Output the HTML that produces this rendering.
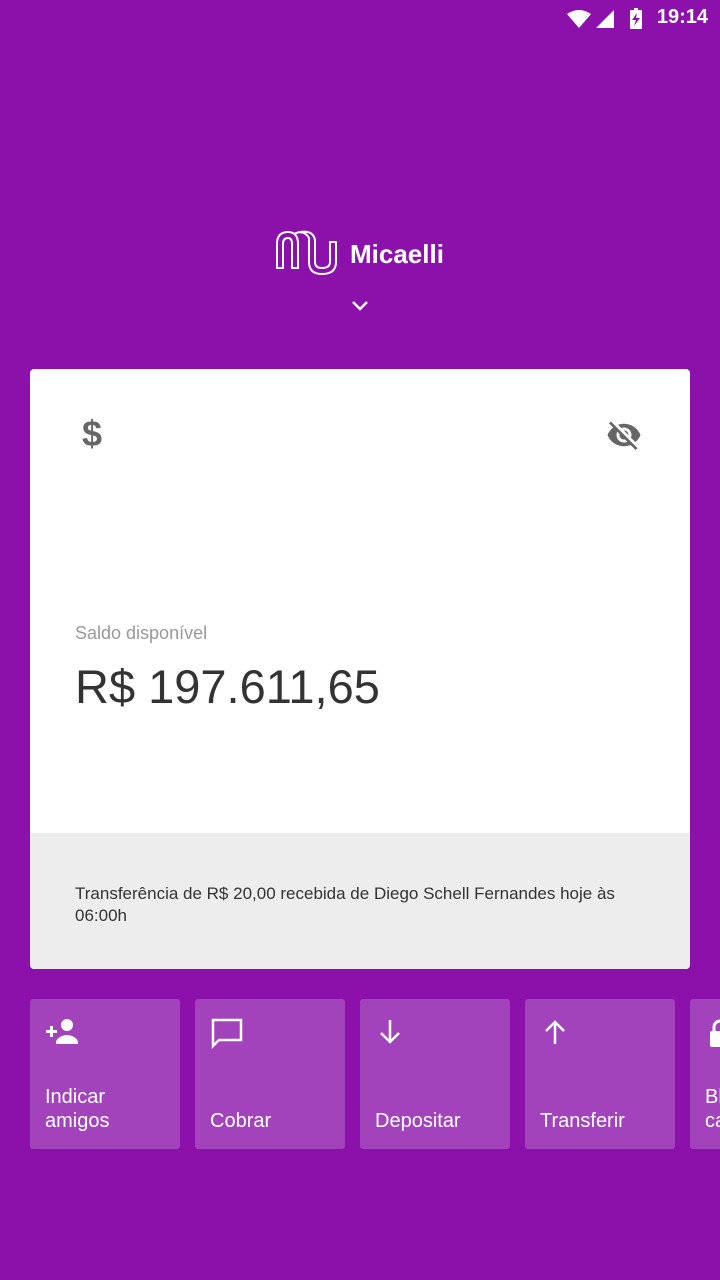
<!DOCTYPE html>
<html><head><meta charset="utf-8"><style>
*{margin:0;padding:0;box-sizing:border-box}
body{width:720px;height:1280px;background:#8c11ab;font-family:"Liberation Sans",sans-serif;position:relative;overflow:hidden}
.abs{position:absolute}
.card{left:30px;top:369px;width:660px;height:600px;background:#fff;border-radius:4px;overflow:hidden}
.foot{position:absolute;left:0;top:464px;width:660px;height:136px;background:#ededed;padding:50px 45px 0;font-size:17px;color:#333;line-height:22px}
.tile{position:absolute;top:999px;width:150px;height:150px;background:#a343bc;border-radius:3px;color:#fff;font-size:20px}
.tile .t{position:absolute;left:15px;bottom:16px;line-height:24px}
.tile svg{position:absolute;left:15px;top:18px}
</style></head><body>
<div class="abs" style="right:12px;top:6px;color:#fff;font-size:20px;font-weight:bold">19:14</div>
<svg class="abs" style="left:566px;top:8px" width="82" height="22" viewBox="0 0 82 22"><path d="M1 6 Q13 -2 25 6 L13 20Z" fill="#fff"/><path d="M30 20 L48 2 V20Z" fill="#fff"/><rect x="64" y="2" width="12" height="19" rx="1" fill="#fff"/><rect x="68" y="0" width="4" height="3" fill="#fff"/><path d="M71 5 L66 12 H70 L68 18 L74 10 H70Z" fill="#8c11ab"/></svg>
<svg class="abs" style="left:276px;top:230px" width="62" height="46" viewBox="0 0 62 46" fill="none" stroke="#fff" stroke-width="2"><path d="M1 38 V14 Q1 2 12 2 Q22 2 22 14 V38 H16 V14 Q16 8 12 8 Q7 8 7 14 V38 Z"/><path d="M18 4 Q28 -1 33 8 L33 32 Q33 44 46 44 Q60 44 60 32 V12 H54 V32 Q54 38 46 38 Q39 38 39 32 V10 Q37 0 24 2"/></svg>
<div class="abs" style="left:350px;top:239px;color:#fff;font-size:26px;font-weight:bold">Micaelli</div>
<svg class="abs" style="left:351px;top:300px" width="18" height="12" viewBox="0 0 18 12"><path d="M2 2 L9 9 L16 2" stroke="#fff" stroke-width="2.5" fill="none"/></svg>
<div class="abs card">
<div class="abs" style="left:52px;top:44px;font-size:36px;color:#666;font-weight:bold">$</div>
<svg class="abs" style="left:574px;top:48px" width="40" height="36" viewBox="0 0 24 24"><path fill="#666" d="M12 7c2.76 0 5 2.24 5 5 0 .65-.13 1.26-.36 1.83l2.92 2.92c1.51-1.26 2.7-2.89 3.43-4.75-1.73-4.39-6-7.5-11-7.5-1.4 0-2.74.25-3.98.7l2.16 2.16C10.74 7.13 11.35 7 12 7zM2 4.27l2.28 2.28.46.46C3.08 8.3 1.78 10.02 1 12c1.73 4.39 6 7.5 11 7.5 1.55 0 3.03-.3 4.38-.84l.42.42L19.73 22 21 20.73 3.27 3 2 4.27zM7.53 9.8l1.55 1.55c-.05.21-.08.43-.08.65 0 1.66 1.34 3 3 3 .22 0 .44-.03.65-.08l1.55 1.55c-.67.33-1.41.53-2.2.53-2.76 0-5-2.24-5-5 0-.79.2-1.53.53-2.2zm4.31-.78l3.15 3.15.02-.16c0-1.66-1.34-3-3-3l-.17.01z"/></svg>
<div class="abs" style="left:45px;top:254px;font-size:18px;color:#999">Saldo disponível</div>
<div class="abs" style="left:45px;top:290px;font-size:47px;color:#333">R$ 197.611,65</div>
<div class="foot">Transferência de R$ 20,00 recebida de Diego Schell Fernandes hoje às 06:00h</div>
</div>
<div class="tile" style="left:30px"><svg width="36" height="30" viewBox="0 0 36 30" fill="#fff"><path d="M1 13h4V9h3v4h4v3H8v4H5v-4H1z"/><circle cx="22" cy="8" r="6"/><path d="M11 26c0-6 8-8 11-8s11 2 11 8v1H11z"/></svg><div class="t">Indicar<br>amigos</div></div>
<div class="tile" style="left:195px"><svg width="34" height="32" viewBox="0 0 34 32"><path d="M3 3h28v20H9l-6 6z" fill="none" stroke="#fff" stroke-width="2.5"/></svg><div class="t">Cobrar</div></div>
<div class="tile" style="left:360px"><svg width="30" height="30" viewBox="0 0 30 30"><path d="M15 3v22M6 16l9 9 9-9" fill="none" stroke="#fff" stroke-width="2.5"/></svg><div class="t">Depositar</div></div>
<div class="tile" style="left:525px"><svg width="30" height="30" viewBox="0 0 30 30"><path d="M15 27V5M6 14l9-9 9 9" fill="none" stroke="#fff" stroke-width="2.5"/></svg><div class="t">Transferir</div></div>
<div class="tile" style="left:690px"><svg width="30" height="34" viewBox="0 0 30 34"><path d="M9 14V10a6 6 0 0 1 12 0v4" fill="none" stroke="#fff" stroke-width="3"/><rect x="5" y="14" width="20" height="16" rx="2" fill="#fff"/></svg><div class="t">Bl<br>ca</div></div>
</body></html>
